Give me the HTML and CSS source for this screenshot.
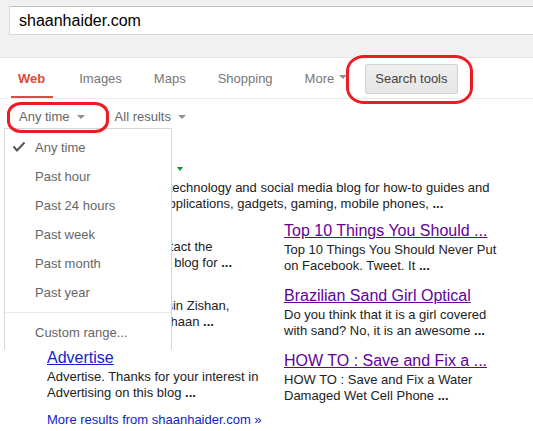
FILE: index.html
```html
<!DOCTYPE html>
<html>
<head>
<meta charset="utf-8">
<link rel="stylesheet" href="styles.css">
</head>
<body>
<div class="topbar">
  <div class="searchbox">shaanhaider.com</div>
</div>
<div class="tabs">
  <div class="tab active">Web</div>
  <div class="tab">Images</div>
  <div class="tab">Maps</div>
  <div class="tab">Shopping</div>
  <div class="tab more">More<span class="caret"></span></div>
  <div class="btn">Search tools</div>
</div>
<div class="filters">
  <div class="filter">Any time<span class="caret"></span></div>
  <div class="filter second">All results<span class="caret"></span></div>
</div>
<div class="results">
  <div class="main-result">
    <a class="r-title">Shaan Haider</a>
    <div class="cite">www.shaanhaider.com<span class="gcaret"></span></div>
    <div class="snippet">Shaan Haider is a top technology and social media blog for how-to guides and<br>news and reviews of applications, gadgets, gaming, mobile phones, <b>...</b></div>
  </div>
  <div class="sitelinks">
    <div class="col col-left">
      <div class="sl">
        <a class="sl-title blue">Contact</a>
        <div class="sl-snip">Use this forum to contact the<br>the webmaster of this blog for <b>...</b></div>
      </div>
      <div class="sl sl-2">
        <a class="sl-title blue">About</a>
        <div class="sl-snip">Meet the authors: Yasin Zishan,<br>Muhammad Ali and Shaan <b>...</b></div>
      </div>
      <div class="sl sl-3">
        <a class="sl-title blue">Advertise</a>
        <div class="sl-snip">Advertise. Thanks for your interest in<br>Advertising on this blog <b>...</b></div>
      </div>
    </div>
    <div class="col col-right">
      <div class="sl">
        <a class="sl-title visited">Top 10 Things You Should ...</a>
        <div class="sl-snip">Top 10 Things You Should Never Put<br>on Facebook. Tweet. It <b>...</b></div>
      </div>
      <div class="sl sl-r">
        <a class="sl-title visited">Brazilian Sand Girl Optical</a>
        <div class="sl-snip">Do you think that it is a girl covered<br>with sand? No, it is an awesome <b>...</b></div>
      </div>
      <div class="sl sl-r">
        <a class="sl-title visited">HOW TO : Save and Fix a ...</a>
        <div class="sl-snip">HOW TO : Save and Fix a Water<br>Damaged Wet Cell Phone <b>...</b></div>
      </div>
    </div>
  </div>
  <a class="more-results">More results from shaanhaider.com &raquo;</a>
</div>

<div class="menu">
  <div class="mi checked"><svg class="check" width="14" height="12" viewBox="0 0 14 12"><path d="M1.5 5.5 L5 9.5 L12.5 1.5" fill="none" stroke="#555" stroke-width="2"/></svg>Any time</div>
  <div class="mi">Past hour</div>
  <div class="mi">Past 24 hours</div>
  <div class="mi">Past week</div>
  <div class="mi">Past month</div>
  <div class="mi">Past year</div>
  <div class="sep"></div>
  <div class="mi">Custom range...</div>
</div>

<div class="mark mark-time"></div>
<div class="mark mark-tools"></div>
</body>
</html>
```

FILE: styles.css
```css
html, body {
  margin: 0;
  padding: 0;
}
body {
  font-family: "Liberation Sans", Arial, sans-serif;
  background: #fff;
  width: 533px;
  height: 431px;
  overflow: hidden;
  position: relative;
}
a { cursor: pointer; }

.topbar {
  height: 58px;
  box-sizing: border-box;
  background: #f1f1f1;
  border-bottom: 1px solid #e5e5e5;
  padding: 6px 0 0 9px;
}
.searchbox {
  height: 29px;
  box-sizing: border-box;
  border: 1px solid #d9d9d9;
  border-top-color: #c0c0c0;
  border-right: none;
  background: #fff;
  padding-left: 9px;
  font-size: 16px;
  line-height: 27px;
  color: #000;
}

.tabs {
  display: flex;
  height: 41px;
  box-sizing: border-box;
  border-bottom: 1px solid #ebebeb;
  padding-left: 11px;
}
.tab {
  position: relative;
  display: flex;
  align-items: center;
  padding: 0 8px;
  margin-right: 16px;
  font-size: 13px;
  color: #777;
}
.tab.active {
  color: #dd4b39;
  font-weight: bold;
  padding: 0 8px 0 7px;
  margin-right: 18px;
}
.tab.active::after {
  content: "";
  position: absolute;
  left: 0;
  right: 0;
  bottom: 0;
  height: 2px;
  background: #dd4b39;
}
.tab.more {
  margin-right: 10px;
}
.caret {
  display: inline-block;
  width: 0;
  height: 0;
  border-left: 4px solid transparent;
  border-right: 4px solid transparent;
  border-top: 4px solid #909090;
  margin-left: 5px;
  vertical-align: middle;
  position: relative;
  top: -1px;
}
.btn {
  align-self: center;
  height: 30px;
  box-sizing: border-box;
  border: 1px solid #d3d3d3;
  border-radius: 2px;
  background: #eaeaea;
  background-image: linear-gradient(#eeeeee, #e6e6e6);
  padding: 0 9px;
  font-size: 13px;
  line-height: 28px;
  color: #444;
  position: relative;
  top: 1px;
}

.filters {
  display: flex;
  padding: 10px 0 3px 19px;
  font-size: 13px;
  line-height: 16px;
  color: #666;
}
.filter .caret { margin-left: 7px; }
.filter.second { margin-left: 30px; }

.results {
  padding: 9px 0 0 40px;
  font-size: 13px;
}
.r-title {
  display: block;
  font-size: 16px;
  line-height: 20px;
  color: #12c;
  text-decoration: underline;
}
.cite {
  margin-top: 3px;
  line-height: 16px;
  color: #093;
}
.gcaret {
  display: inline-block;
  width: 0;
  height: 0;
  border-left: 3.5px solid transparent;
  border-right: 3.5px solid transparent;
  border-top: 4px solid #093;
  margin-left: 7px;
  vertical-align: middle;
}
.snippet {
  margin-top: 4px;
  line-height: 16px;
  color: #222;
  white-space: nowrap;
}
.snippet b, .sl-snip b { font-weight: bold; }

.sitelinks {
  display: flex;
  margin: 6px 0 0 7px;
}
.col-left { width: 237px; }
.col-right { padding-top: 3px; }
.sl-title {
  display: block;
  font-size: 16px;
  line-height: 20px;
  text-decoration: underline;
  white-space: nowrap;
}
.sl-title.blue { color: #12c; }
.sl-title.visited { color: #609; }
.sl-snip {
  margin-top: 1px;
  line-height: 16px;
  color: #222;
  white-space: nowrap;
}
.sl-2 { margin-top: 6px; }
.sl-3 { margin-top: 18px; }
.sl-r { margin-top: 12px; }

.more-results {
  display: block;
  margin: 8px 0 0 7px;
  line-height: 16px;
  color: #12c;
}

.menu {
  position: absolute;
  left: 4px;
  top: 128px;
  width: 168px;
  box-sizing: border-box;
  background: #fff;
  border: 1px solid #d6d6d6;
  border-bottom: none;
  padding: 4px 0 3px;
}
.mi {
  height: 29px;
  line-height: 29px;
  padding-left: 30px;
  font-size: 13px;
  color: #666;
  display: flex;
  align-items: center;
}
.mi.checked { padding-left: 7px; }
.check { margin-right: 9px; margin-top: -2px; }
.sep {
  height: 1px;
  background: #ebebeb;
  margin: 5px 0;
}

.mark {
  position: absolute;
  border: 3px solid #ed1c24;
  box-sizing: border-box;
}
.mark-time {
  left: 7px;
  top: 102px;
  width: 102px;
  height: 31px;
  border-radius: 14px / 12px;
}
.mark-tools {
  left: 346px;
  top: 55px;
  width: 127px;
  height: 49px;
  border-radius: 18px / 16px;
}
```
